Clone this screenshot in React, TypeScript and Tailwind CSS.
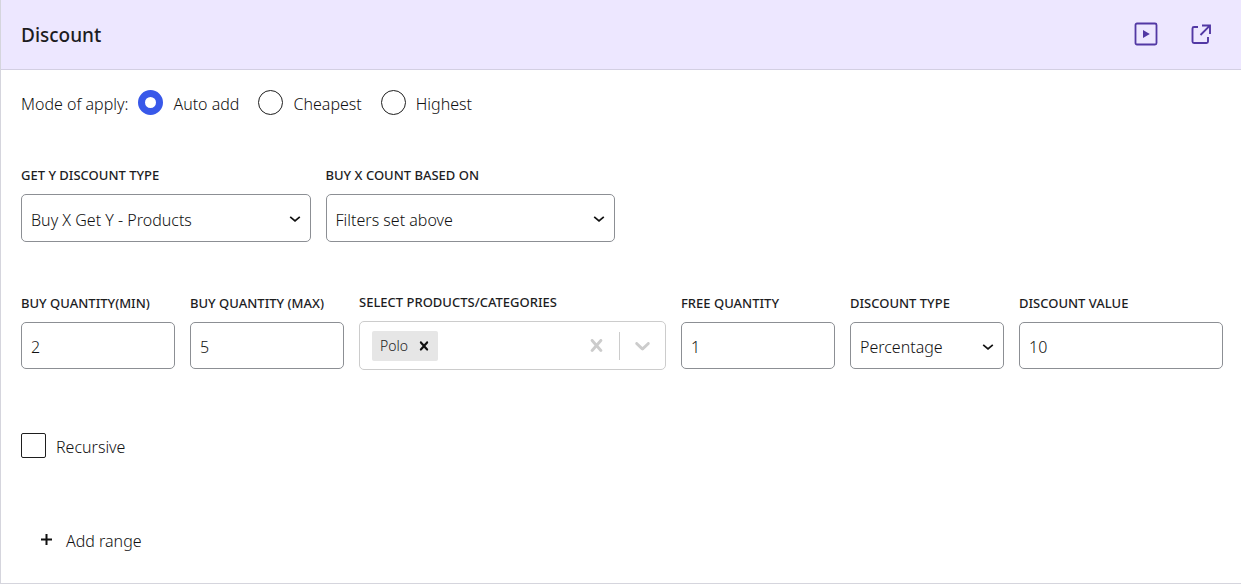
import type { ReactNode } from "react";

const labelClass = "block text-[13px] leading-5 font-medium uppercase whitespace-nowrap text-[#1d1d1f]";
const controlClass =
  "block w-full min-w-0 rounded-[5px] border border-[#8c8f94] bg-white px-[9px] pt-[3px] text-[16px] font-light text-[#111] outline-none focus:border-[#3858e9]";

function Field({ id, label, children }: { id: string; label: string; children: ReactNode }) {
  return (
    <div className="flex min-w-0 flex-col gap-[9px]">
      <label htmlFor={id} className={labelClass}>
        {label}
      </label>
      {children}
    </div>
  );
}

function TextField({ id, label, value }: { id: string; label: string; value: string }) {
  return (
    <Field id={id} label={label}>
      <input id={id} type="text" inputMode="numeric" defaultValue={value} className={`${controlClass} h-[47px]`} />
    </Field>
  );
}

function SelectField({
  id,
  label,
  options,
  tall = false,
}: {
  id: string;
  label: string;
  options: string[];
  tall?: boolean;
}) {
  return (
    <Field id={id} label={label}>
      <div className="relative">
        <select id={id} className={`${controlClass} ${tall ? "h-12" : "h-[47px]"} appearance-none pr-8`}>
          {options.map((option) => (
            <option key={option}>{option}</option>
          ))}
        </select>
        <svg
          viewBox="0 0 12 8"
          className="pointer-events-none absolute top-1/2 right-[10px] h-2 w-3 -translate-y-1/2 text-[#111]"
          fill="none"
          stroke="currentColor"
          strokeWidth="1.7"
          aria-hidden="true"
        >
          <path d="M1.200 2.900 6 6.900l4.800-4" />
        </svg>
      </div>
    </Field>
  );
}

function Cross({ className }: { className: string }) {
  return (
    <svg viewBox="0 0 20 20" className={className} fill="currentColor" aria-hidden="true">
      <path d="M14.348 14.849c-0.469 0.469-1.229 0.469-1.697 0l-2.651-3.030-2.651 3.029c-0.469 0.469-1.229 0.469-1.697 0-0.469-0.469-0.469-1.229 0-1.697l2.758-3.150-2.759-3.152c-0.469-0.469-0.469-1.228 0-1.697s1.228-0.469 1.697 0l2.652 3.031 2.651-3.031c0.469-0.469 1.228-0.469 1.697 0s0.469 1.229 0 1.697l-2.758 3.152 2.758 3.150c0.469 0.469 0.469 1.229 0 1.698z" />
    </svg>
  );
}

function ModeOption({ label, checked = false }: { label: string; checked?: boolean }) {
  return (
    <label className="flex items-center gap-[10px]">
      <input
        type="radio"
        name="mode"
        defaultChecked={checked}
        className="size-[25px] shrink-0 appearance-none rounded-full border border-[#1e1e1e] bg-white checked:border-[7px] checked:border-[#3858e9]"
      />
      <span className="pt-[2px]">{label}</span>
    </label>
  );
}

export default function App() {
  return (
    <section className="border-b border-l border-[#d5d5dd] bg-white font-['Noto_Sans','Open_Sans',sans-serif] text-[16px] leading-5 font-light text-[#111]">
      <header className="flex h-[70px] items-center justify-between border-b border-[#d3cfe2] bg-[#ede7ff] pr-7 pb-px pl-5">
        <h2 className="pt-[2px] text-[19px] leading-7 font-medium text-[#1d1d1f]">Discount</h2>
        <div className="flex items-center gap-[30px]">
          <button type="button" aria-label="Watch video" className="text-[#5238a4]">
            <svg viewBox="0 0 26 26" className="size-[26px]" fill="none" stroke="currentColor" strokeWidth="1.800" aria-hidden="true">
              <rect x="2.500" y="2.500" width="21" height="21" rx="1.500" />
              <path d="M10 9v8l6.800-4z" fill="currentColor" stroke="none" />
            </svg>
          </button>
          <button type="button" aria-label="Open documentation" className="text-[#5238a4]">
            <svg viewBox="0 0 24 24" className="size-6" fill="none" stroke="currentColor" strokeWidth="1.900" aria-hidden="true">
              <path d="M9 5H5a1.500 1.500 0 0 0-1.500 1.500v13A1.500 1.500 0 0 0 5 21h12.500a1.500 1.500 0 0 0 1.500-1.500V15M13 3.500h8V12M20.800 3.700 11.500 13" />
            </svg>
          </button>
        </div>
      </header>

      <div className="pt-5 pr-[18px] pb-8 pl-5">
        <fieldset className="flex flex-wrap items-center gap-x-[19px] gap-y-3">
          <div className="flex items-center gap-[10px]">
            <span className="pt-[2px]">Mode of apply:</span>
            <ModeOption label="Auto add" checked />
          </div>
          <ModeOption label="Cheapest" />
          <ModeOption label="Highest" />
        </fieldset>

        <div className="mt-[50px] grid max-w-[594px] grid-cols-2 gap-[15px]">
          <SelectField id="discount-kind" label="Get Y discount type" options={["Buy X Get Y - Products"]} tall />
          <SelectField id="count-basis" label="Buy X count based on" options={["Filters set above"]} tall />
        </div>

        <div className="mt-[50px] grid grid-cols-[154fr_154fr_307fr_154fr_154fr_204fr] items-center gap-[15px]">
          <TextField id="buy-min" label="Buy quantity(min)" value="2" />
          <TextField id="buy-max" label="Buy quantity (max)" value="5" />
          <Field id="products" label="Select products/categories">
            <div className="flex h-[49px] items-center rounded-[5px] border border-[#ccc] bg-white pl-3">
              <span className="flex h-[30px] items-center rounded-[2px] bg-[#e6e6e6] pl-2 text-[14px] text-[#222]">
                Polo
                <button type="button" aria-label="Remove Polo" className="ml-[2px] px-[5px] text-[#111]">
                  <Cross className="size-[18px]" />
                </button>
              </span>
              <input id="products" type="text" className="min-w-0 flex-1 bg-transparent px-1 outline-none" />
              <button type="button" aria-label="Clear selection" className="px-[10px] text-[#ccc]">
                <Cross className="size-[25px]" />
              </button>
              <span className="h-7 w-px bg-[#ccc]" />
              <button type="button" aria-label="Show options" className="px-[10px] text-[#ccc]">
                <svg viewBox="0 0 20 20" className="size-[25px]" fill="currentColor" aria-hidden="true">
                  <path d="M4.516 7.548c0.436-0.446 1.043-0.481 1.576 0l3.908 3.747 3.908-3.747c0.533-0.481 1.141-0.446 1.574 0 0.436 0.445 0.408 1.197 0 1.615-0.406 0.418-4.695 4.502-4.695 4.502-0.217 0.223-0.502 0.335-0.787 0.335s-0.570-0.112-0.789-0.335c0 0-4.287-4.084-4.695-4.502s-0.436-1.170 0-1.615z" />
                </svg>
              </button>
            </div>
          </Field>
          <TextField id="free-quantity" label="Free quantity" value="1" />
          <SelectField id="discount-type" label="Discount type" options={["Percentage"]} />
          <TextField id="discount-value" label="Discount value" value="10" />
        </div>

        <label className="mt-[63px] flex w-fit items-center gap-[10px]">
          <input
            type="checkbox"
            className="size-[25px] appearance-none rounded-[2px] border border-[#1e1e1e] bg-white checked:bg-[#3858e9]"
          />
          <span className="pt-[2px]">Recursive</span>
        </label>

        <button type="button" className="mt-[73px] ml-5 flex items-center gap-[14px]">
          <svg viewBox="0 0 11 11" className="mb-1 size-[11px]" stroke="currentColor" strokeWidth="2" aria-hidden="true">
            <path d="M5.500 0v11M0 5.500h11" />
          </svg>
          Add range
        </button>
      </div>
    </section>
  );
}
